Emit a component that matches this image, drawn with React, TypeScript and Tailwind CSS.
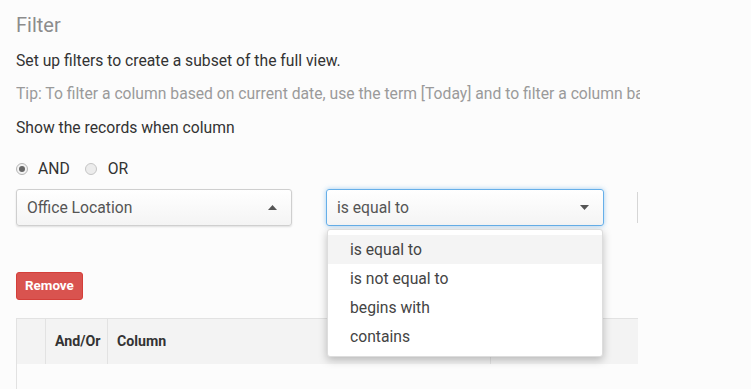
import React from 'react';

const options = ['is equal to', 'is not equal to', 'begins with', 'contains'];

function Caret({ up }: { up?: boolean }) {
  return (
    <svg width="9" height="5" viewBox="0 0 9 5" className="fill-[#555]">
      {up ? <path d="M0 5 L4.5 0 L9 5 Z" /> : <path d="M0 0 L4.5 5 L9 0 Z" />}
    </svg>
  );
}

export default function App() {
  return (
    <div className="w-[751px] h-[389px] overflow-hidden bg-[#fcfcfc] px-4 pt-[13px] text-[15.7px] text-[#333] font-['Roboto',sans-serif]">
      <h2 className="text-[20px] leading-[24px] text-[#8c8c8c]">Filter</h2>
      <p className="mt-[14px] leading-[20px]">Set up filters to create a subset of the full view.</p>
      <p className="mt-[13px] leading-[20px] text-[#9a9a9a] whitespace-nowrap w-[624px] overflow-hidden">
        Tip: To filter a column based on current date, use the term [Today] and to filter a column based on current user, use [Me]
      </p>
      <p className="mt-[14px] leading-[20px]">Show the records when column</p>

      <div className="mt-[21px] flex items-center h-[20px]">
        <span className="w-[12px] h-[12px] rounded-full border border-[#b5b5b5] bg-[#f3f3f3] flex items-center justify-center">
          <span className="w-[6px] h-[6px] rounded-full bg-[#666]" />
        </span>
        <span className="ml-[10px]">AND</span>
        <span className="ml-[15px] w-[12px] h-[12px] rounded-full border border-[#c5c5c5] bg-[#ececec]" />
        <span className="ml-[11px]">OR</span>
      </div>

      <div className="mt-[10px] flex items-start">
        <div className="w-[276px] h-[37px] rounded-[3px] border border-[#cfcfcf] bg-gradient-to-b from-white to-[#f4f4f4] shadow-[0_1px_2px_rgba(0,0,0,0.12)] flex items-center justify-between pl-[10px] pr-[14px] text-[#555]">
          <span>Office Location</span>
          <Caret up />
        </div>
        <div className="relative ml-[34px]">
          <div className="w-[278px] h-[37px] rounded-[3px] border border-[#66afe9] bg-gradient-to-b from-white to-[#f4f4f4] shadow-[0_0_5px_rgba(102,175,233,0.6)] flex items-center justify-between pl-[10px] pr-[14px] text-[#555]">
            <span>is equal to</span>
            <Caret />
          </div>
          <div className="absolute z-10 left-[1px] top-[40px] w-[276px] rounded-[3px] border border-[#ddd] bg-white py-[5px] shadow-[0_3px_8px_rgba(0,0,0,0.25)]">
            {options.map((o, i) => (
              <div key={o} className={`h-[29px] pl-[22px] flex items-center text-[#444] ${i === 0 ? 'bg-[#f4f4f4]' : ''}`}>
                {o}
              </div>
            ))}
          </div>
        </div>
        <div className="ml-[33px] mt-[3px] w-px h-[31px] bg-[#d6d6d6]" />
      </div>

      <button className="mt-[46px] block h-[28px] px-[8px] rounded-[3px] bg-[#d9534f] border border-[#d43f3a] text-white text-[13.4px] font-bold">
        Remove
      </button>

      <div className="mt-[18px] w-[622px] border-t border-l border-[#e2e2e2]">
        <div className="flex h-[45px] bg-[#f3f3f3] text-[#333] font-bold text-[14.2px]">
          <div className="w-[29px] border-r border-[#e2e2e2]" />
          <div className="w-[62px] border-r border-[#e2e2e2] flex items-center pl-[9px]">And/Or</div>
          <div className="w-[383px] border-r border-[#e2e2e2] flex items-center pl-[9px]">Column</div>
          <div className="flex-1" />
        </div>
        <div className="h-[30px] bg-[#fcfcfc]" />
      </div>
    </div>
  );
}
